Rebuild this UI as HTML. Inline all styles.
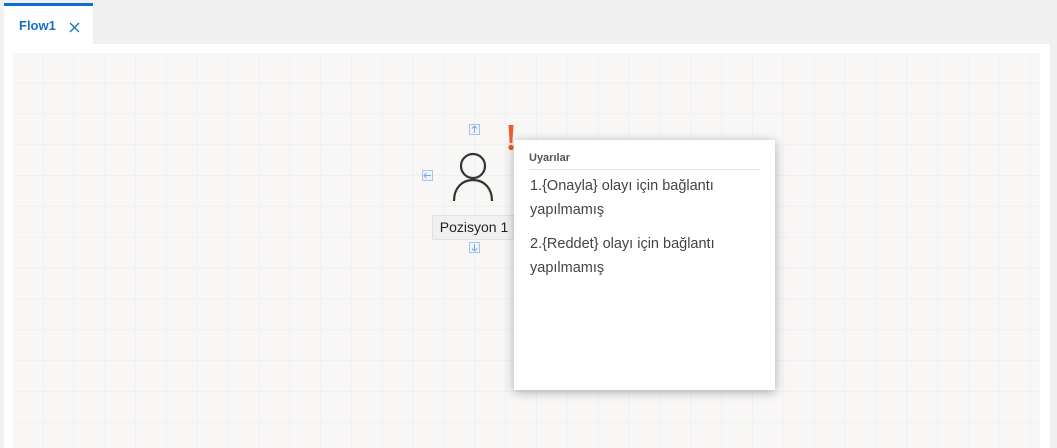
<!DOCTYPE html>
<html><head><meta charset="utf-8"><style>
*{margin:0;padding:0;box-sizing:border-box}
body{width:1057px;height:448px;background:#f0f0f0;font-family:"Liberation Sans",sans-serif;position:relative;overflow:hidden}
.tab{position:absolute;left:4px;top:3px;width:89px;height:41px;background:#fff;border-top:3px solid #0a6fd0}
.tab span{position:absolute;left:15px;top:12px;font-size:13px;font-weight:bold;color:#1a6fc9}
.tab svg{position:absolute;left:65px;top:16px}
.panel{position:absolute;left:4px;top:44px;width:1046px;height:404px;background:#fff}
.canvas{position:absolute;left:13px;top:53px;width:1027px;height:395px;background-color:#f8f7f6;
background-image:linear-gradient(to right,#edf1f7 1px,transparent 1px),linear-gradient(to bottom,#efefef 1px,transparent 1px);
background-size:30.85px 30.85px;background-position:29.5px 29.5px}
.pop{position:absolute;left:514px;top:140px;width:261px;height:250px;background:#fff;box-shadow:0 2px 10px rgba(0,0,0,.3)}
.pop h4{position:absolute;left:15px;top:12px;font-size:11px;color:#555;font-weight:bold}
.pop .hr{position:absolute;left:15px;top:29px;width:231px;height:1px;background:#e4e4e4}
.pop p{position:absolute;left:16px;font-size:14.5px;line-height:24px;color:#444;width:200px}
.lbl{position:absolute;left:432px;top:215px;width:84px;height:25px;background:#f1f1f1;border:1px solid #e2e2e2;border-radius:2px;font-size:14px;color:#222;text-align:center;line-height:23px}
.ar{position:absolute;width:11px;height:11px;border:1px solid #a9c4e8;background:#eef4fc}
</style></head><body>
<div class="tab"><span>Flow1</span><svg width="11" height="11" viewBox="0 0 11 11"><path d="M1 1L10 10M10 1L1 10" stroke="#1a6fc9" stroke-width="1.3"/></svg></div>
<div class="panel"></div>
<div class="canvas"></div>
<div class="ar" style="left:469px;top:124px"><svg width="9" height="9" viewBox="0 0 9 9" style="display:block"><path d="M4.5 8V1M2 3.5L4.5 1L7 3.5" stroke="#7fa6db" fill="none"/></svg></div>
<div class="ar" style="left:422px;top:170px"><svg width="9" height="9" viewBox="0 0 9 9" style="display:block"><path d="M8 4.5H1M3.5 2L1 4.5L3.5 7" stroke="#7fa6db" fill="none"/></svg></div>
<div class="ar" style="left:469px;top:242px"><svg width="9" height="9" viewBox="0 0 9 9" style="display:block"><path d="M4.5 1V8M2 5.5L4.5 8L7 5.5" stroke="#7fa6db" fill="none"/></svg></div>
<svg style="position:absolute;left:450px;top:150px" width="46" height="52" viewBox="0 0 46 52"><circle cx="23" cy="16" r="12" fill="none" stroke="#333" stroke-width="2.2"/><path d="M4 51C4 38 12 30 23 30C34 30 42 38 42 51" fill="none" stroke="#333" stroke-width="2.2"/></svg>
<div class="lbl">Pozisyon 1</div>
<svg style="position:absolute;left:507px;top:125px" width="8" height="26" viewBox="0 0 8 26"><path d="M1.5 0H6.5L5.3 18H2.7Z" fill="#ee5a2a"/><circle cx="4" cy="22.5" r="2.6" fill="#ee5a2a"/></svg>
<div class="pop"><h4>Uyarılar</h4><div class="hr"></div>
<p style="top:34px">1.{Onayla} olayı için bağlantı yapılmamış</p>
<p style="top:92px">2.{Reddet} olayı için bağlantı yapılmamış</p></div>
</body></html>
